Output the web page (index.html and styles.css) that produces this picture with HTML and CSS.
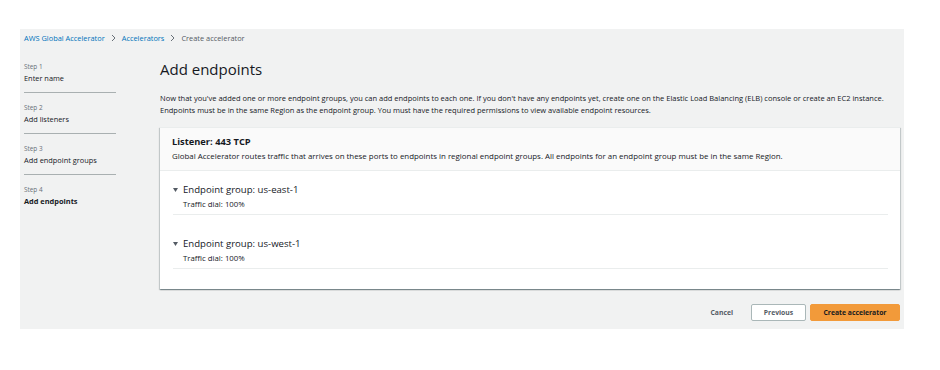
FILE: index.html
```html
<!DOCTYPE html>
<html lang="en">
<head>
    <meta charset="UTF-8">
    <meta name="viewport" content="width=device-width, initial-scale=1.0">
    <title>Create accelerator</title>
    <link rel="stylesheet" href="styles.css">
</head>
<body>

<div class="console">

    <!-- breadcrumb -->
    <div class="crumbs">
        <a href="#">AWS Global Accelerator</a>
        <svg class="chev" width="5" height="8" viewBox="0 0 5 8"><path d="M1 1l3 3-3 3" fill="none" stroke="#687078" stroke-width="1"/></svg>
        <a href="#">Accelerators</a>
        <svg class="chev" width="5" height="8" viewBox="0 0 5 8"><path d="M1 1l3 3-3 3" fill="none" stroke="#687078" stroke-width="1"/></svg>
        <span class="current">Create accelerator</span>
    </div>

    <div class="layout">
        <!-- wizard steps -->
        <ul class="steps">
            <li class="step">
                <div class="step-num">Step 1</div>
                <div class="step-name">Enter name</div>
            </li>
            <li class="step">
                <div class="step-num">Step 2</div>
                <div class="step-name">Add listeners</div>
            </li>
            <li class="step">
                <div class="step-num">Step 3</div>
                <div class="step-name">Add endpoint groups</div>
            </li>
            <li class="step active">
                <div class="step-num">Step 4</div>
                <div class="step-name">Add endpoints</div>
            </li>
        </ul>

        <div class="main">
            <h1>Add endpoints</h1>
            <p class="intro">Now that you've added one or more endpoint groups, you can add endpoints to each one. If you don't have any endpoints yet, create one on the Elastic Load Balancing (ELB) console or create an EC2 instance. Endpoints must be in the same Region as the endpoint group. You must have the required permissions to view available endpoint resources.</p>

            <div class="card">
                <div class="card-head">
                    <h2>Listener: 443 TCP</h2>
                    <p>Global Accelerator routes traffic that arrives on these ports to endpoints in regional endpoint groups. All endpoints for an endpoint group must be in the same Region.</p>
                </div>
                <div class="card-body">
                    <div class="group">
                        <div class="group-title"><svg class="caret" width="5" height="4" viewBox="0 0 5 4"><path d="M0 0h5L2.5 4z" fill="#545b64"/></svg>Endpoint group: us-east-1</div>
                        <div class="group-dial">Traffic dial: 100%</div>
                    </div>
                    <div class="group">
                        <div class="group-title"><svg class="caret" width="5" height="4" viewBox="0 0 5 4"><path d="M0 0h5L2.5 4z" fill="#545b64"/></svg>Endpoint group: us-west-1</div>
                        <div class="group-dial">Traffic dial: 100%</div>
                    </div>
                </div>
            </div>

            <div class="actions">
                <button class="btn-link">Cancel</button>
                <button class="btn">Previous</button>
                <button class="btn btn-primary">Create accelerator</button>
            </div>
        </div>
    </div>
</div>

</body>
</html>
```

FILE: styles.css
```css
body, html {
    margin: 0;
    padding: 0;
}

body {
    background: #fff;
    font-family: "Open Sans", "Noto Sans", sans-serif;
    color: #16191f;
}

/* grey console area */
.console {
    margin: 29px 0 0 20px;
    width: 884px;
    height: 300px;
    box-sizing: border-box;
    padding: 4px 4px 0 4px;
    background: #f1f2f2;
}

.crumbs {
    display: flex;
    align-items: center;
    height: 10px;
    font-size: 7.4px;
}

.crumbs a {
    color: #0073bb;
    text-decoration: none;
}

.crumbs .chev {
    margin: 0 6px;
}

.crumbs .current {
    color: #545b64;
}

.layout {
    display: flex;
    margin-top: 9px;
}

/* steps on the left */
.steps {
    list-style: none;
    margin: 0;
    padding: 0;
    width: 92px;
}

.step {
    padding: 9px 0 8px;
    border-bottom: 1px solid #a9b0b1;
}

.step.active {
    border-bottom: none;
}

.step-num {
    font-size: 6.4px;
    line-height: 11px;
    color: #687078;
}

.step-name {
    font-size: 7.4px;
    line-height: 12px;
}

.step.active .step-name {
    font-weight: bold;
}

.main {
    margin-left: 44px;
    flex: 1;
}

h1 {
    margin: 6px 0 0;
    font-size: 15px;
    line-height: 22px;
    font-weight: normal;
}

.intro {
    margin: 12px 0 0;
    font-size: 7.5px;
    line-height: 12px;
}

.card {
    margin-top: 11px;
    background: #fff;
    box-shadow: 0 1px 1px 0 rgba(0, 28, 36, 0.3), 1px 1px 1px 0 rgba(0, 28, 36, 0.15), -1px 1px 1px 0 rgba(0, 28, 36, 0.15);
    border-top: 1px solid #eaeded;
}

.card-head {
    background: #fafafa;
    padding: 7px 12px 8px;
    border-bottom: 1px solid #eaeded;
}

.card-head h2 {
    margin: 0;
    font-size: 9.3px;
    line-height: 14px;
    font-weight: bold;
}

.card-head p {
    margin: 2px 0 0;
    font-size: 7.9px;
    line-height: 11px;
}

.card-body {
    padding: 0 12px 20px 13px;
}

.group {
    padding: 12px 0 4px;
    border-bottom: 1px solid #eaeded;
}

.group + .group {
    margin-top: 10px;
}

.group-title {
    display: flex;
    align-items: center;
    font-size: 9.6px;
    line-height: 14px;
}

.caret {
    margin: 0 5px 0 0;
}

.group-dial {
    margin-top: 1px;
    padding-left: 10px;
    font-size: 7.8px;
    line-height: 12px;
}

/* buttons */
.actions {
    display: flex;
    justify-content: flex-end;
    align-items: center;
    gap: 4px;
    margin-top: 15px;
}

button {
    font-family: inherit;
    font-size: 6.8px;
    font-weight: bold;
    height: 17px;
    border-radius: 2px;
    cursor: pointer;
}

.btn-link {
    background: none;
    border: none;
    color: #545b64;
    padding: 0 14px 0 0;
}

.btn {
    width: 55px;
    background: #fff;
    border: 1px solid #aab7b8;
    color: #545b64;
}

.btn-primary {
    width: 90px;
    background: #f29a3a;
    border-color: #f29a3a;
    color: #16191f;
}
```
